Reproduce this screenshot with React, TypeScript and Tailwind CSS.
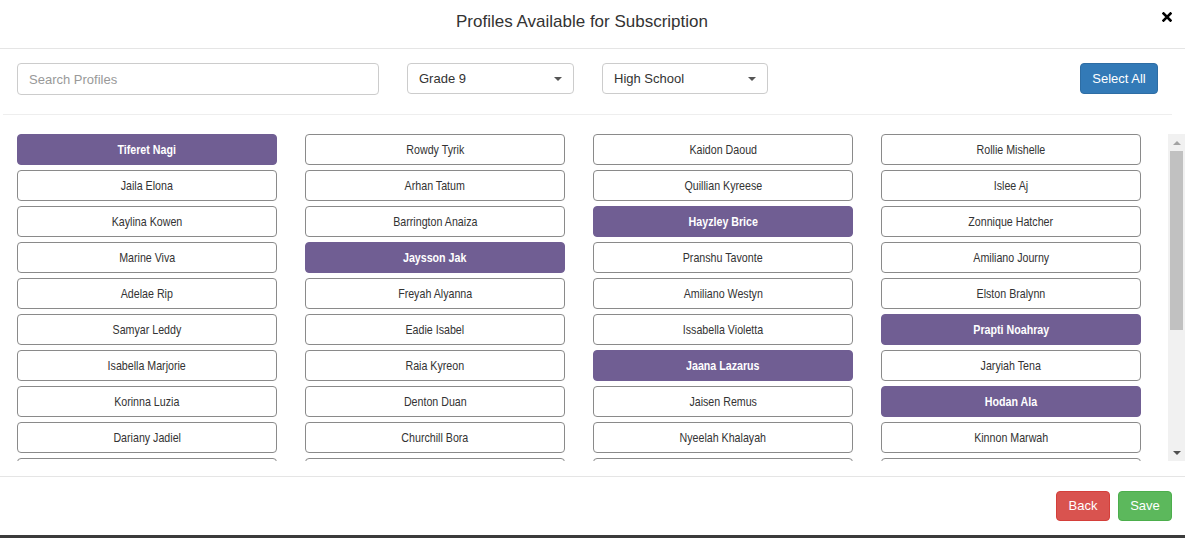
import * as React from 'react';

const names: [string, boolean][] = [
  ['Tiferet Nagi', true], ['Rowdy Tyrik', false], ['Kaidon Daoud', false], ['Rollie Mishelle', false],
  ['Jaila Elona', false], ['Arhan Tatum', false], ['Quillian Kyreese', false], ['Islee Aj', false],
  ['Kaylina Kowen', false], ['Barrington Anaiza', false], ['Hayzley Brice', true], ['Zonnique Hatcher', false],
  ['Marine Viva', false], ['Jaysson Jak', true], ['Pranshu Tavonte', false], ['Amiliano Journy', false],
  ['Adelae Rip', false], ['Freyah Alyanna', false], ['Amiliano Westyn', false], ['Elston Bralynn', false],
  ['Samyar Leddy', false], ['Eadie Isabel', false], ['Issabella Violetta', false], ['Prapti Noahray', true],
  ['Isabella Marjorie', false], ['Raia Kyreon', false], ['Jaana Lazarus', true], ['Jaryiah Tena', false],
  ['Korinna Luzia', false], ['Denton Duan', false], ['Jaisen Remus', false], ['Hodan Ala', true],
  ['Dariany Jadiel', false], ['Churchill Bora', false], ['Nyeelah Khalayah', false], ['Kinnon Marwah', false],
  ['Maelis Orrin', false], ['Tavish Quenby', false], ['Ledger Amaris', false], ['Ysolde Finch', false],
  ['Corbin Vasht', false], ['Anouk Delmar', false], ['Rhett Calloway', false], ['Zaria Penrose', false],
  ['Idris Kellan', false], ['Marlowe Juno', false], ['Solene Varga', false], ['Bastian Oyelaran', false],
  ['Keziah Brandt', false], ['Oren Whitlock', false], ['Liora Santangelo', false], ['Dashiell Moor', false],
  ['Nalani Ferris', false], ['Quade Ellison', false], ['Thea Morcombe', false], ['Ximena Rudd', false],
  ['Emrys Talbot', false], ['Saoirse Keane', false], ['Cassius Bell', false], ['Wren Halloway', false],
];

const Caret = () => (
  <span className="w-0 h-0 border-l-[4px] border-r-[4px] border-t-[4px] border-l-transparent border-r-transparent border-t-[#555]" />
);

export default function App() {
  const [selected, setSelected] = React.useState(names.map((n) => n[1]));

  const toggle = (i: number) => setSelected((s) => s.map((v, j) => (j === i ? !v : v)));

  return (
    <div className="min-h-[538px] bg-[#3b3b3b] font-['Liberation_Sans',Arial,sans-serif] text-[#333]">
      <div className="bg-white">
        {/* Header */}
        <div className="relative h-[49px] border-b border-[#e5e5e5]">
          <h4 className="pt-[10px] pr-[21px] text-center text-[17px] leading-[24px]">
            Profiles Available for Subscription
          </h4>
          <button className="absolute right-[13px] top-[12px] w-[10px] h-[10px]">
            <svg viewBox="0 0 10 10" className="w-[10px] h-[10px]">
              <path d="M1.5 1.5 L8.5 8.5 M8.5 1.5 L1.5 8.5" stroke="#000" strokeWidth="2.6" strokeLinecap="square" />
            </svg>
          </button>
        </div>

        {/* Filters */}
        <div className="pt-[14px]">
          <div className="flex items-start pl-[17px] pr-[27px] gap-[28px]">
            <input
              placeholder="Search Profiles"
              className="w-[362px] h-[32px] px-[11px] rounded-[4px] border border-[#ccc] text-[13px] placeholder:text-[#999] outline-none"
            />
            <div className="w-[167px] h-[31px] px-[11px] rounded-[4px] border border-[#ccc] flex items-center justify-between text-[13px] text-[#333]">
              Grade 9
              <Caret />
            </div>
            <div className="w-[166px] h-[31px] px-[11px] rounded-[4px] border border-[#ccc] flex items-center justify-between text-[13px] text-[#333]">
              High School
              <Caret />
            </div>
            <button className="ml-auto w-[78px] h-[31px] rounded-[4px] bg-[#337ab7] border border-[#2e6da4] text-white text-[13px]">
              Select All
            </button>
          </div>
          <hr className="mt-[19px] mb-[19px] ml-[3px] mr-[13px] border-t border-[#eee]" />
        </div>

        {/* Profile list + scrollbar */}
        <div className="flex h-[327px]">
          <div className="flex-1 overflow-y-auto [scrollbar-width:none]">
            <div className="grid grid-cols-4 gap-x-[28px] gap-y-[5px] pl-[17px] pr-[27px]">
              {names.map(([name], i) => (
                <button
                  key={name}
                  onClick={() => toggle(i)}
                  className={
                    selected[i]
                      ? 'h-[31px] rounded-[4px] bg-[#705e93] border border-[#705e93] text-white font-bold text-[13px] overflow-hidden'
                      : 'h-[31px] rounded-[4px] bg-white border border-[#8a8a8a] text-[#333] text-[13px] overflow-hidden'
                  }
                >
                  <span className="inline-block whitespace-nowrap scale-x-[0.82]">{name}</span>
                </button>
              ))}
            </div>
          </div>
          <div className="w-[17px] shrink-0 bg-[#f1f1f1] flex flex-col items-center">
            <div className="h-[17px] w-full flex items-center justify-center">
              <span className="w-0 h-0 border-l-[4px] border-r-[4px] border-b-[4px] border-l-transparent border-r-transparent border-b-[#a3a3a3]" />
            </div>
            <div className="w-[13px] h-[179px] bg-[#c1c1c1]" />
            <div className="flex-1" />
            <div className="h-[17px] w-full flex items-center justify-center">
              <span className="w-0 h-0 border-l-[4px] border-r-[4px] border-t-[4px] border-l-transparent border-r-transparent border-t-[#505050]" />
            </div>
          </div>
        </div>

        {/* Footer */}
        <div className="mt-[15px] border-t border-[#e5e5e5] pt-[14px] pb-[14px] pr-[13px] flex justify-end gap-[8px]">
          <button className="w-[54px] h-[30px] rounded-[4px] bg-[#d9534f] border border-[#d43f3a] text-white text-[13px]">
            Back
          </button>
          <button className="w-[54px] h-[30px] rounded-[4px] bg-[#5cb85c] border border-[#4cae4c] text-white text-[13px]">
            Save
          </button>
        </div>
      </div>
    </div>
  );
}
